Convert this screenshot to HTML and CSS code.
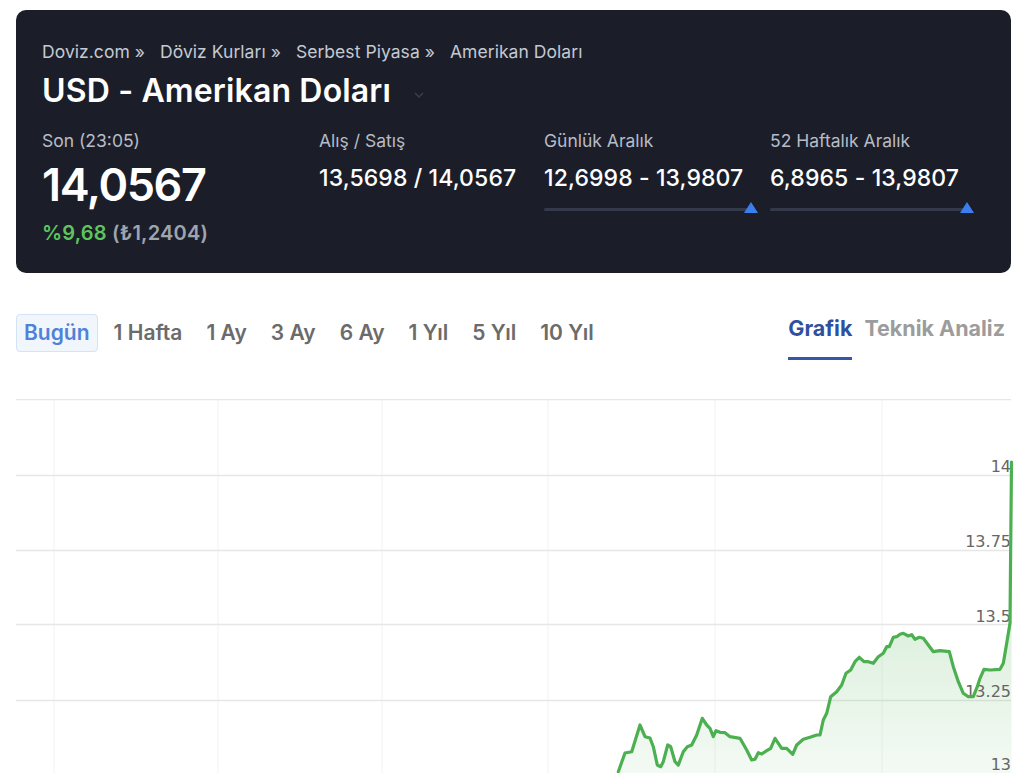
FILE: index.html
```html
<!DOCTYPE html>
<html lang="tr">
<head>
<meta charset="utf-8">
<title>USD - Amerikan Doları</title>
<link rel="stylesheet" href="styles.css">
</head>
<body>
<section class="card">
  <nav class="crumbs">
    <span>Doviz.com »</span>
    <span>Döviz Kurları »</span>
    <span>Serbest Piyasa »</span>
    <span>Amerikan Doları</span>
  </nav>
  <h1 class="title">USD - Amerikan Doları
    <svg class="chev" width="12" height="8" viewBox="0 0 12 8"><path d="M2 2l4 4 4-4" fill="none" stroke="#3a3f4e" stroke-width="1.5"/></svg>
  </h1>
  <div class="stats">
    <div class="stat">
      <div class="label">Son (23:05)</div>
      <div class="big">14,0567</div>
      <div class="change"><span class="up">%9,68</span> <span class="abs">(₺1,2404)</span></div>
    </div>
    <div class="stat">
      <div class="label">Alış / Satış</div>
      <div class="val">13,5698 / 14,0567</div>
    </div>
    <div class="stat">
      <div class="label">Günlük Aralık</div>
      <div class="val">12,6998 - 13,9807</div>
      <div class="range r1"><span class="track"></span><span class="tri"></span></div>
    </div>
    <div class="stat">
      <div class="label">52 Haftalık Aralık</div>
      <div class="val">6,8965 - 13,9807</div>
      <div class="range r2"><span class="track"></span><span class="tri"></span></div>
    </div>
  </div>
</section>

<div class="toolbar">
  <div class="periods">
    <span class="period active">Bugün</span>
    <span class="period">1 Hafta</span>
    <span class="period">1 Ay</span>
    <span class="period">3 Ay</span>
    <span class="period">6 Ay</span>
    <span class="period">1 Yıl</span>
    <span class="period">5 Yıl</span>
    <span class="period">10 Yıl</span>
  </div>
  <div class="views">
    <span class="view active">Grafik</span>
    <span class="view">Teknik Analiz</span>
  </div>
</div>

<div class="chart">
  <svg width="1008" height="380" viewBox="16 399 1008 380">
    <defs>
      <linearGradient id="fill" x1="0" y1="0" x2="0" y2="1">
        <stop offset="0" stop-color="#4caf50" stop-opacity="0.32"/>
        <stop offset="1" stop-color="#4caf50" stop-opacity="0.06"/>
      </linearGradient>
    </defs>
    <g stroke="#f2f2f2" stroke-width="1">
      <line x1="54" y1="400" x2="54" y2="780"/>
      <line x1="218" y1="400" x2="218" y2="780"/>
      <line x1="382" y1="400" x2="382" y2="780"/>
      <line x1="548" y1="400" x2="548" y2="780"/>
      <line x1="715" y1="400" x2="715" y2="780"/>
      <line x1="882" y1="400" x2="882" y2="780"/>
    </g>
    <g stroke="#e6e6e6" stroke-width="1.5">
      <line x1="16" y1="399.5" x2="1011" y2="399.5"/>
      <line x1="16" y1="475.5" x2="1011" y2="475.5"/>
      <line x1="16" y1="550.5" x2="1011" y2="550.5"/>
      <line x1="16" y1="624.5" x2="1011" y2="624.5"/>
      <line x1="16" y1="700.5" x2="1011" y2="700.5"/>
      <line x1="16" y1="776.5" x2="1011" y2="776.5"/>
    </g>
    <polygon fill="url(#fill)" points="618,780 618.3,771.7 625,753 631.7,751.7 640,725 645,736.7 650,738 653.3,746.7 657.3,765 660.7,766.7 663.3,761.7 667.7,745 670.7,746.7 675,761.7 678.3,765 683.3,751.7 687.3,746.7 691.7,745 696.7,735 702.3,718.3 706.7,725 710,728.3 713.3,736.7 716,730.7 720,732.3 725,732.7 730,736.7 740,738.3 746.7,750 751.7,760 755,759.3 758.3,752.7 761.7,754 766.7,750.7 770.7,748.3 775,738.3 781.7,748.3 786.7,748.3 792.7,754.3 796.7,745 803.3,739.3 810,737.3 816.7,735 820,735 823.3,720 826.7,713.3 830.7,696.7 836.7,691.7 841.7,685 846,673.3 850.7,670 855,661.7 859.3,657.3 864,661.7 868.3,661.7 873.3,663.3 878.3,656.7 883.3,653.3 886.7,646.7 889.3,646.7 893.3,637.3 896.7,636.7 900,634.3 903.3,633.3 908.3,636 911.7,634.7 915,639.3 919.3,637.3 923.3,638.3 928.3,645 933.3,651.7 940,650.7 949.3,651.7 953.3,666.7 958.3,681.7 963.3,693.3 968.3,696.7 973.3,696.7 977.3,686.7 980,678.3 984,669.3 990,670 1000,669.3 1003.3,663.3 1006.7,643.3 1010,623.3 1010.7,546.7 1011.5,462 1011.5,780"/>
    <g class="ylab" text-anchor="end">
      <text x="1011" y="472">14</text>
      <text x="1011" y="547">13.75</text>
      <text x="1011" y="622">13.5</text>
      <text x="1011" y="697">13.25</text>
      <text x="1011" y="770">13</text>
    </g>
    <polyline fill="none" stroke="#4caf50" stroke-width="3.2" stroke-linejoin="round" stroke-linecap="round" points="618.3,771.7 625,753 631.7,751.7 640,725 645,736.7 650,738 653.3,746.7 657.3,765 660.7,766.7 663.3,761.7 667.7,745 670.7,746.7 675,761.7 678.3,765 683.3,751.7 687.3,746.7 691.7,745 696.7,735 702.3,718.3 706.7,725 710,728.3 713.3,736.7 716,730.7 720,732.3 725,732.7 730,736.7 740,738.3 746.7,750 751.7,760 755,759.3 758.3,752.7 761.7,754 766.7,750.7 770.7,748.3 775,738.3 781.7,748.3 786.7,748.3 792.7,754.3 796.7,745 803.3,739.3 810,737.3 816.7,735 820,735 823.3,720 826.7,713.3 830.7,696.7 836.7,691.7 841.7,685 846,673.3 850.7,670 855,661.7 859.3,657.3 864,661.7 868.3,661.7 873.3,663.3 878.3,656.7 883.3,653.3 886.7,646.7 889.3,646.7 893.3,637.3 896.7,636.7 900,634.3 903.3,633.3 908.3,636 911.7,634.7 915,639.3 919.3,637.3 923.3,638.3 928.3,645 933.3,651.7 940,650.7 949.3,651.7 953.3,666.7 958.3,681.7 963.3,693.3 968.3,696.7 973.3,696.7 977.3,686.7 980,678.3 984,669.3 990,670 1000,669.3 1003.3,663.3 1006.7,643.3 1010,623.3 1010.7,546.7 1011.5,462"/>
  </svg>
</div>
</body>
</html>
```

FILE: styles.css
```css
* { box-sizing: border-box; }
html, body { margin: 0; padding: 0; background: #fff; }
body {
  font-family: Inter, "Noto Sans", "DejaVu Sans", sans-serif;
  width: 1024px;
  overflow: hidden;
}
.card {
  margin: 10px 13px 0 16px;
  height: 263px;
  background: #1b1e29;
  border-radius: 10px;
  padding: 30px 26px 0 26px;
  color: #fff;
}
.crumbs {
  display: flex;
  gap: 15px;
  font-size: 17.5px;
  line-height: 24px;
  letter-spacing: 0.05px;
  color: #c5c9d2;
}
.title {
  margin: 7px 0 0 0;
  font-size: 32px;
  line-height: 40px;
  font-weight: 600;
  letter-spacing: 0.15px;
  display: flex;
  align-items: center;
}
.chev { margin-left: 22px; margin-top: 8px; }
.stats {
  margin-top: 18px;
  display: grid;
  grid-template-columns: 277px 225px 226px 1fr;
}
.label {
  font-size: 17.5px;
  line-height: 24px;
  color: #b8bcc6;
}
.big {
  margin-top: 6px;
  font-size: 45px;
  line-height: 52px;
  font-weight: 600;
  letter-spacing: -1.4px;
}
.change {
  margin-top: 9px;
  font-size: 20px;
  line-height: 26px;
  font-weight: 600;
  letter-spacing: 0.2px;
}
.up { color: #5fc45c; }
.abs { color: #a0a4ad; }
.val {
  margin-top: 10px;
  font-size: 23px;
  line-height: 30px;
  font-weight: 500;
  letter-spacing: 0.1px;
}
.range {
  position: relative;
  margin-top: 9px;
  height: 12px;
}
.r1 { width: 214px; }
.r2 { width: 204px; }
.track {
  position: absolute;
  left: 0; right: 4px; top: 6px;
  height: 3px;
  background: #343a4b;
  border-radius: 2px;
}
.tri {
  position: absolute;
  right: 0; top: 0;
  width: 0; height: 0;
  border-left: 7px solid transparent;
  border-right: 7px solid transparent;
  border-bottom: 11px solid #3b7ef0;
}
.toolbar {
  display: flex;
  justify-content: space-between;
  align-items: flex-start;
  margin: 41px 13px 0 16px;
  height: 85px;
}
.periods { display: flex; gap: 8px; }
.period {
  font-size: 21px;
  line-height: 36px;
  font-weight: 600;
  color: #6b6b6b;
  padding: 0 7px;
  border: 1px solid transparent;
  border-radius: 4px;
}
.period.active {
  color: #4f82d8;
  background: #f1f6fd;
  border-color: #d5e3f7;
}
.views {
  display: flex;
  gap: 12px;
  margin-top: 1px;
  margin-right: 6px;
}
.view {
  font-size: 21.5px;
  line-height: 26px;
  font-weight: 700;
  color: #9c9c9c;
  padding-bottom: 16px;
  border-bottom: 3px solid transparent;
}
.view.active {
  color: #2f509f;
  border-bottom-color: #3656a8;
}
.chart {
  margin: 0;
  padding-left: 16px;
  height: 380px;
}
.chart svg { display: block; }
.ylab text {
  font-family: "DejaVu Sans", sans-serif;
  font-size: 16px;
  fill: #666;
}
```
